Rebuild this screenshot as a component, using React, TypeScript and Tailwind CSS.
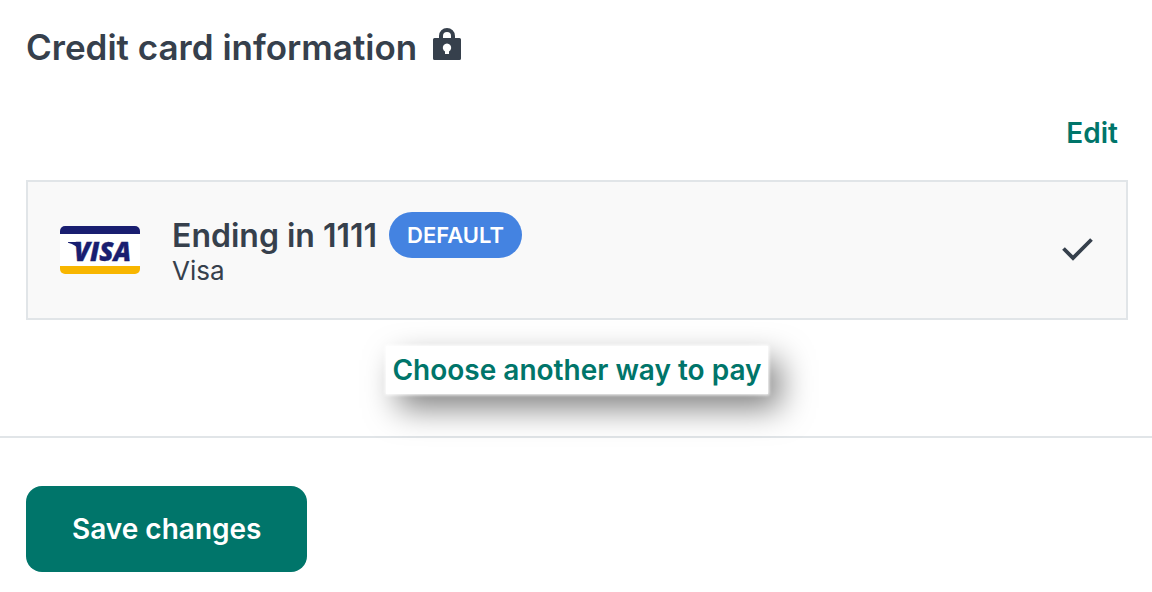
function LockIcon() {
  return (
    <svg viewBox="0 0 28 32" className="h-8 w-7 shrink-0" role="img" aria-label="Secure">
      <path
        fill="#36404c"
        fillRule="evenodd"
        d="M6 10V8a8 8 0 0 1 16 0v2h4.500a1.500 1.500 0 0 1 1.500 1.500v19a1.500 1.500 0 0 1-1.500 1.500h-25A1.500 1.500 0 0 1 0 30.500v-19A1.500 1.500 0 0 1 1.500 10ZM10 10h8V8a4 4 0 0 0-8 0ZM12 26h4v-2.600a4.200 4.200 0 1 0-4 0Z"
      />
    </svg>
  );
}

function VisaLogo() {
  return (
    <svg viewBox="0 0 80 48" className="h-12 w-20 shrink-0" role="img" aria-label="Visa">
      <rect width="80" height="48" rx="5" fill="#fff" />
      <path d="M0 8V5a5 5 0 0 1 5-5h70a5 5 0 0 1 5 5v3Z" fill="#191e70" />
      <path d="M0 40v3a5 5 0 0 0 5 5h70a5 5 0 0 0 5-5v-3Z" fill="#f8b600" />
      <path d="M8 16h10l3 10C18 21 13.500 18 8 16.800Z" fill="#191e70" />
      <text
        x="14"
        y="35"
        fill="#191e70"
        stroke="#191e70"
        strokeWidth="0.400"
        fontFamily="'Open Sans', sans-serif"
        fontSize="26"
        fontStyle="italic"
        fontWeight="800"
      >
        VISA
      </text>
    </svg>
  );
}

function CheckIcon() {
  return (
    <svg viewBox="0 0 32 24" className="h-6 w-8 shrink-0" role="img" aria-label="Selected">
      <path d="M1.500 10.500 11 20 29.500 1.500" fill="none" stroke="#36404c" strokeWidth="3.800" />
    </svg>
  );
}

export default function App() {
  return (
    <main className="bg-white font-['Inter',sans-serif] text-[#36404c]">
      <section className="pt-5 pr-6 pb-[42px] pl-[26px]">
        <header className="flex items-center gap-4">
          <h1 className="text-[35px] leading-[54px] font-semibold">Credit card information</h1>
          <div className="pb-1.5">
            <LockIcon />
          </div>
        </header>

        <div className="mt-[39px] flex justify-end pr-[10px]">
          <a href="#edit" className="text-[28px] leading-10 font-semibold text-[#00756a]">
            Edit
          </a>
        </div>

        <div className="mt-[27px] flex items-center gap-8 border-2 border-[#e1e5e8] bg-[#f9f9f9] px-8 py-[30px]">
          <VisaLogo />
          <div className="grow pb-1">
            <div className="flex items-center gap-3">
              <h2 className="pt-0.5 text-[32px] leading-[44px] font-semibold">Ending in 1111</h2>
              <span className="rounded-full bg-[#4483e1] px-[18px] text-[22px] leading-[46px] font-semibold text-white">
                DEFAULT
              </span>
            </div>
            <p className="text-[26px] leading-[26px]">Visa</p>
          </div>
          <CheckIcon />
        </div>

        <div className="mt-[26px] flex justify-center">
          <a
            href="#payment-methods"
            className="bg-white px-1.5 py-1 text-[28px] leading-10 font-semibold text-[#00756a] shadow-[0_0_3px_1px_#fff,12px_14px_32px_rgba(0,0,0,0.5)]"
          >
            Choose another way to pay
          </a>
        </div>
      </section>

      <footer className="border-t-2 border-[#e1e5e8] px-[26px] pt-12 pb-5">
        <button
          type="button"
          className="rounded-2xl bg-[#00756a] px-[46px] text-[28px] leading-[86px] font-semibold text-white"
        >
          Save changes
        </button>
      </footer>
    </main>
  );
}
